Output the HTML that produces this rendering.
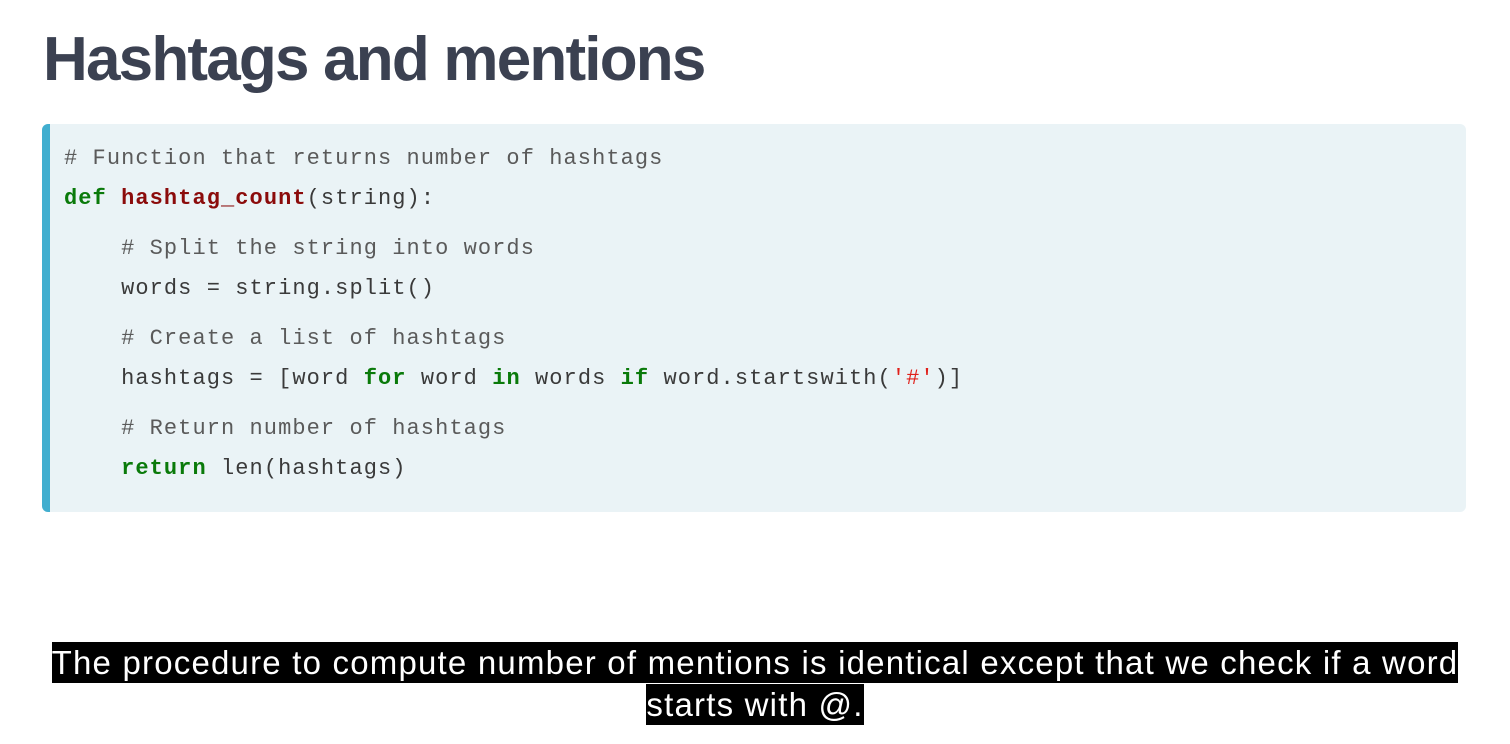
<!DOCTYPE html>
<html><head><style>
body{margin:0;background:#fff;width:1510px;height:744px;position:relative;overflow:hidden}
h1{position:absolute;left:43px;top:20px;margin:0;font:bold 62px/80px "Liberation Sans",sans-serif;color:#3b4151;letter-spacing:-1.8px;white-space:nowrap}
.code{position:absolute;left:42px;top:124px;width:1424px;height:388px;background:#eaf3f6;border-radius:6px;overflow:hidden}
.bar{position:absolute;left:0;top:0;bottom:0;width:8px;background:#41aecf}
.l{position:absolute;left:64px;font:22px "Liberation Mono",monospace;letter-spacing:1.07px;color:#3a3a3a;white-space:pre}
.c{color:#5a5a5a}.k{color:#0a7a0a;font-weight:bold}.f{color:#8b0b0b;font-weight:bold}.s{color:#e0201a}
.cap{position:absolute;left:0;width:1510px;top:642px;text-align:center;font:33px/42px "Liberation Sans",sans-serif;letter-spacing:1.2px;color:#fff}
.cap span{background:#000;padding:2px 0}
</style></head><body>
<h1>Hashtags and mentions</h1>
<div class="code"><div class="bar"></div></div>
<div class="l c" style="top:146px"># Function that returns number of hashtags</div>
<div class="l" style="top:186px"><span class="k">def</span> <span class="f">hashtag_count</span>(string):</div>
<div class="l c" style="top:236px">    # Split the string into words</div>
<div class="l" style="top:276px">    words = string.split()</div>
<div class="l c" style="top:326px">    # Create a list of hashtags</div>
<div class="l" style="top:366px">    hashtags = [word <span class="k">for</span> word <span class="k">in</span> words <span class="k">if</span> word.startswith(<span class="s">'#'</span>)]</div>
<div class="l c" style="top:416px">    # Return number of hashtags</div>
<div class="l" style="top:456px">    <span class="k">return</span> len(hashtags)</div>
<div class="cap"><span>The procedure to compute number of mentions is identical except that we check if a word</span><br><span>starts with @.</span></div>
</body></html>
